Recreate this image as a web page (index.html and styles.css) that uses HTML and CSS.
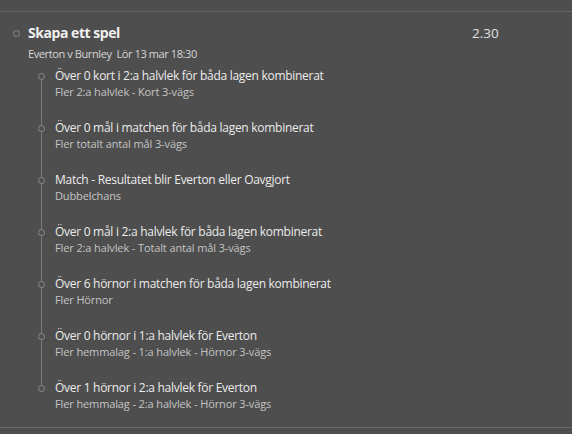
FILE: index.html
```html
<!DOCTYPE html>
<html lang="sv">
<head>
<meta charset="utf-8">
<link rel="stylesheet" href="styles.css">
</head>
<body>
<div class="panel">
  <div class="rule"></div>
  <div class="slip">
    <div class="head">
      <span class="dot"></span>
      <div class="head-text">
        <div class="title">Skapa ett spel</div>
        <div class="match">Everton v Burnley&nbsp; Lör 13 mar 18:30</div>
      </div>
      <div class="odds">2.30</div>
    </div>
    <ul class="legs">
      <li class="leg"><span class="dot"></span><div><div class="leg-title">Över 0 kort i 2:a halvlek för båda lagen kombinerat</div><div class="leg-sub">Fler 2:a halvlek - Kort 3-vägs</div></div></li>
      <li class="leg"><span class="dot"></span><div><div class="leg-title">Över 0 mål i matchen för båda lagen kombinerat</div><div class="leg-sub">Fler totalt antal mål 3-vägs</div></div></li>
      <li class="leg"><span class="dot"></span><div><div class="leg-title">Match - Resultatet blir Everton eller Oavgjort</div><div class="leg-sub">Dubbelchans</div></div></li>
      <li class="leg"><span class="dot"></span><div><div class="leg-title">Över 0 mål i 2:a halvlek för båda lagen kombinerat</div><div class="leg-sub">Fler 2:a halvlek - Totalt antal mål 3-vägs</div></div></li>
      <li class="leg"><span class="dot"></span><div><div class="leg-title">Över 6 hörnor i matchen för båda lagen kombinerat</div><div class="leg-sub">Fler Hörnor</div></div></li>
      <li class="leg"><span class="dot"></span><div><div class="leg-title">Över 0 hörnor i 1:a halvlek för Everton</div><div class="leg-sub">Fler hemmalag - 1:a halvlek - Hörnor 3-vägs</div></div></li>
      <li class="leg"><span class="dot"></span><div><div class="leg-title">Över 1 hörnor i 2:a halvlek för Everton</div><div class="leg-sub">Fler hemmalag - 2:a halvlek - Hörnor 3-vägs</div></div></li>
    </ul>
  </div>
  <div class="rule rule-bottom"></div>
</div>
</body>
</html>
```
FILE: styles.css
```css
html, body {
  margin: 0;
  padding: 0;
  background: #4e4e4e;
}
body {
  width: 572px;
  height: 434px;
  overflow: hidden;
  font-family: "Open Sans", "Noto Sans", sans-serif;
  color: #e6e6e6;
}
.panel {
  padding-top: 11px;
}
.rule {
  height: 1px;
  background: #656565;
}
.rule-bottom {
  background: #6a6a6a;
}
.slip {
  padding: 13px 0 16px 0;
}
.head {
  display: flex;
  align-items: flex-start;
}
.dot {
  flex: none;
  width: 5px;
  height: 5px;
  border: 1px solid #8c8c8c;
  border-radius: 50%;
  box-sizing: content-box;
}
.head .dot {
  margin: 5px 8px 0 13px;
}
.head-text {
  flex: 1;
}
.title {
  font-weight: 700;
  font-size: 14px;
  line-height: 16px;
  color: #f0f0f0;
  letter-spacing: -0.45px;
}
.match {
  font-size: 11px;
  line-height: 15px;
  margin-top: 5px;
  color: #d6d6d6;
  letter-spacing: -0.4px;
}
.odds {
  width: 100px;
  font-size: 13.5px;
  line-height: 16px;
  color: #e0e0e0;
}
.legs {
  list-style: none;
  margin: 7px 0 0 0;
  padding: 0;
}
.leg {
  position: relative;
  display: flex;
  align-items: flex-start;
  height: 52px;
}
.leg:last-child {
  height: 31px;
}
.leg::before {
  content: "";
  position: absolute;
  left: 41px;
  top: 11px;
  height: 52px;
  width: 1px;
  background: #7a7a7a;
}
.leg:last-child::before {
  display: none;
}
.leg .dot {
  margin: 5px 10px 0 38px;
  background: #4e4e4e;
  position: relative;
  z-index: 1;
}
.leg-title {
  font-size: 12px;
  line-height: 16px;
  color: #ebebeb;
  letter-spacing: -0.28px;
}
.leg-sub {
  font-size: 11px;
  line-height: 14px;
  color: #c4c4c4;
  margin-top: 1px;
  letter-spacing: -0.12px;
}
```
